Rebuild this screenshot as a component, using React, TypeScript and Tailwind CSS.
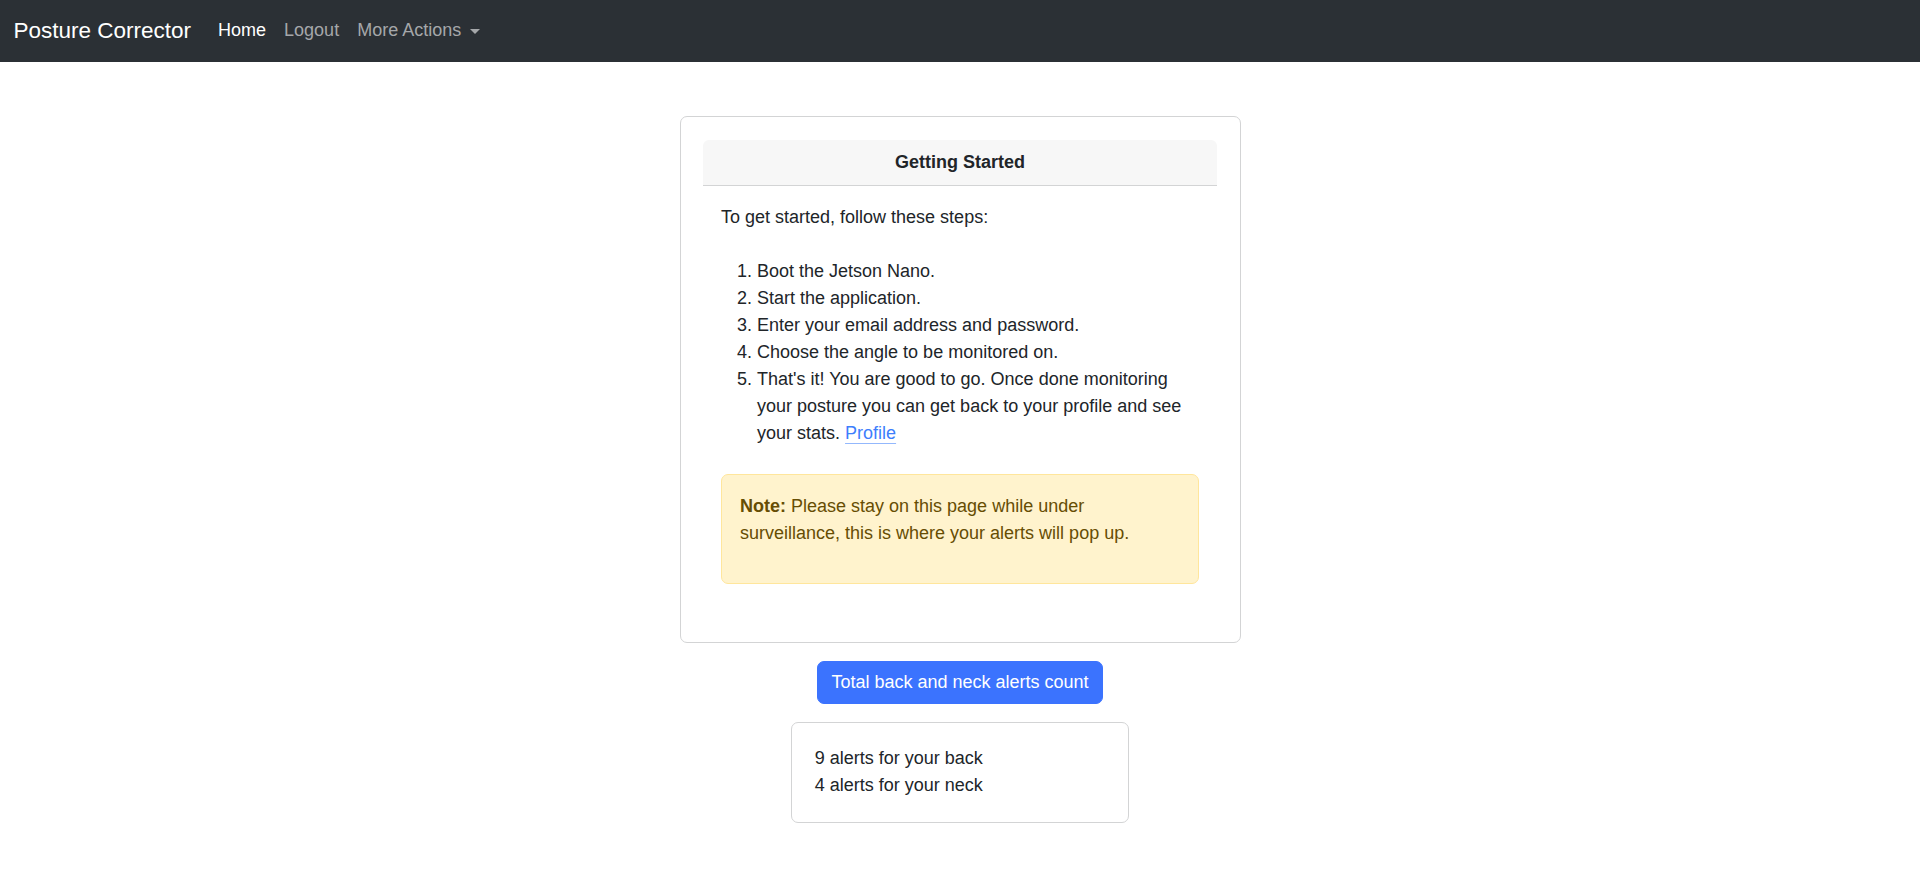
import React from "react";

export default function App() {
  return (
    <div
      className="min-h-[892px] bg-white text-[#212529] text-[18px] leading-[27px]"
      style={{ fontFamily: '"Liberation Sans", Arial, sans-serif' }}
    >
      <nav className="h-[62px] bg-[#2b3035] flex items-center px-[13.5px] pb-[1px]">
        <span className="text-white text-[22.5px] leading-[33.75px] mr-[18px]">
          Posture Corrector
        </span>
        <div className="flex items-center">
          <a className="px-[9px] text-white">Home</a>
          <a className="px-[9px] text-[#a5a7aa]">Logout</a>
          <a className="px-[9px] text-[#a5a7aa] flex items-center">
            More Actions
            <span className="ml-[9px] mt-[1px] w-0 h-0 border-t-[5px] border-t-[#a5a7aa] border-l-[5px] border-l-transparent border-r-[5px] border-r-transparent" />
          </a>
        </div>
      </nav>

      <main className="flex flex-col items-center pt-[54px]">
        <div className="w-[561px] border border-[#d3d4d5] rounded-[7px] p-[22.5px]">
          <div className="bg-[#f7f7f7] border-b border-[#d3d4d5] rounded-t-[6px] py-[9px] px-[18px] text-center font-bold">
            Getting Started
          </div>
          <div className="p-[18px]">
            <p className="mb-[27px]">To get started, follow these steps:</p>
            <ol className="list-decimal pl-[36px] mb-[27px]">
              <li>Boot the Jetson Nano.</li>
              <li>Start the application.</li>
              <li>Enter your email address and password.</li>
              <li>Choose the angle to be monitored on.</li>
              <li>
                That's it! You are good to go. Once done monitoring your posture
                you can get back to your profile and see your stats.{" "}
                <a className="text-[#3d7efc] underline decoration-[#93b8fd] underline-offset-[4px]">
                  Profile
                </a>
              </li>
            </ol>
            <div className="bg-[#fff3cd] border border-[#ffe69c] rounded-[7px] p-[18px] mb-[18px] text-[#664d03]">
              <p className="mb-[18px]">
                <strong className="font-bold">Note:</strong> Please stay on this page
                while under surveillance, this is where your alerts will pop up.
              </p>
            </div>
          </div>
        </div>

        <button className="mt-[18px] bg-[#3b73fe] text-white rounded-[7px] px-[13.5px] py-[6.75px] border border-[#3b73fe] leading-[27px]">
          Total back and neck alerts count
        </button>

        <div className="mt-[18px] w-[337.5px] border border-[#d3d4d5] rounded-[7px] p-[22.5px]">
          <div>9 alerts for your back</div>
          <div>4 alerts for your neck</div>
        </div>
      </main>
    </div>
  );
}
